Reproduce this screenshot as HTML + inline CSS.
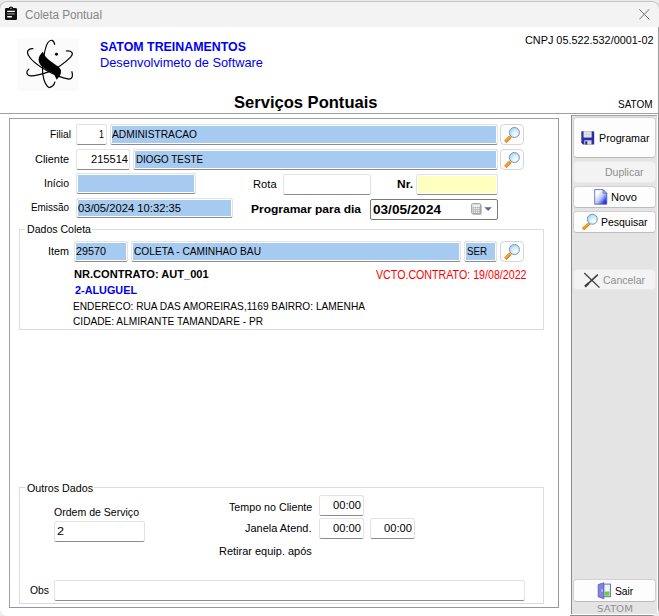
<!DOCTYPE html>
<html><head><meta charset="utf-8"><title>Coleta Pontual</title>
<style>
*{box-sizing:border-box;margin:0;padding:0}
html,body{width:659px;height:616px;overflow:hidden;background:#ebebeb}
body{font-family:"Liberation Sans","DejaVu Sans",sans-serif;font-size:11px;color:#000;position:relative}
.abs{position:absolute;white-space:nowrap}
#win{position:absolute;left:0;top:0;width:659px;height:616px;background:#fff;border-radius:8px;overflow:hidden}
#frame{position:absolute;left:-1px;top:1px;width:661px;height:20px;border:1px solid #c4c4c4;border-bottom:0;border-radius:8px 8px 0 0;pointer-events:none}
#tbar{position:absolute;left:0;top:0;width:659px;height:27px;background:#f3f3f3;border-top:1px solid #ebebeb}
.t{position:absolute;white-space:nowrap;font-size:11px;line-height:14px;transform-origin:0 0;display:block}
.b{font-weight:bold}
.ed{position:absolute;background:#fff;border:1px solid #e3e3e3;border-bottom:1px solid #8c8c8c;border-radius:2.5px}
.bl{background:#a6caf0;box-shadow:inset 0 0 0 1px #fff}
.ye{background:#ffffc0;box-shadow:inset 0 0 0 1px #fff}
.grp{position:absolute;border:1px solid #dcdcdc}
.gl{position:absolute;background:#fff;height:14px}
.btn{position:absolute;left:573px;width:83px;background:#fdfdfd;border:1px solid #d0d0d0;border-bottom-color:#bcbcbc;border-radius:4px}
.btn.dis{background:#f3f3f3;border-color:#e9e9e9}
.sb{position:absolute;width:24px;height:21px;background:#fdfdfd;border:1px solid #d6d6d6;border-radius:4px}
</style></head><body>
<div id="win">
<div id="tbar"></div>
<svg class="abs" style="left:4px;top:6px" width="14" height="15" viewBox="0 0 14 15"><path d="M2.2 2.1h2.6a2.2 1.5 0 0 1 4.4 0h2.6a1.2 1.2 0 0 1 1.2 1.2v9.5a1.2 1.2 0 0 1-1.2 1.2h-9.6a1.2 1.2 0 0 1-1.2-1.2v-9.5a1.2 1.2 0 0 1 1.2-1.2z" fill="#111"/><ellipse cx="7" cy="2.3" rx="1.2" ry="0.5" fill="#999"/><rect x="3.1" y="4.7" width="7.8" height="1.3" rx="0.4" fill="#fff"/><rect x="3.1" y="7.3" width="7.8" height="1.3" rx="0.4" fill="#8a8a8a"/><rect x="3.1" y="10" width="4.9" height="1.4" rx="0.4" fill="#fff"/></svg>
<svg class="abs" style="left:639px;top:9px" width="11" height="11" viewBox="0 0 11 11"><path d="M0.3 0.3L10.3 10.3M10.3 0.3L0.3 10.3" stroke="#6e6e6e" stroke-width="1" fill="none"/></svg>

<div class="abs" style="left:17px;top:38px;width:62px;height:53px;background:#fbfbfb"></div>
<svg class="abs" style="left:14px;top:34px" width="70" height="60" viewBox="0 0 659 565">
<g fill="none" stroke="#000" stroke-width="11" stroke-linecap="round">
<path d="M383 98C375 55 345 45 320 80C295 115 280 190 268 320C265 400 290 480 330 505C355 500 378 478 385 452"/>
<path d="M178 138C135 135 115 165 135 200C160 245 230 300 300 340C360 375 450 415 515 425C555 425 555 385 545 355"/>
<path d="M140 330C110 355 115 390 160 395C215 395 290 370 345 350C420 315 490 260 535 215C565 180 545 155 492 160"/>
</g>
<path d="M272 166C285 200 310 232 348 258C388 286 428 308 440 335C450 372 430 402 402 430C390 408 386 388 372 374C338 352 288 332 252 296C230 268 224 235 242 203C252 188 262 178 272 166Z" fill="#000"/>
<circle cx="400" cy="190" r="14" fill="#000"/>
</svg>
<div class="abs" style="left:0;top:113px;width:659px;height:1px;background:#a0a0a0"></div>
<div class="abs" style="left:658px;top:27px;width:1px;height:87px;background:#9c9c9c"></div>

<div class="abs" style="left:9px;top:118px;width:550px;height:490px;border:1px solid #979797;border-top-color:#a0a0a0;border-left-color:#a0a0a0"></div>

<div class="ed" style="left:76px;top:124px;width:31px;height:21px"></div>
<div class="ed bl" style="left:110px;top:124px;width:388px;height:21px"></div>
<div class="sb" style="left:500px;top:124px"><svg width="22" height="19" viewBox="1 1 22 19" style="position:absolute;left:0;top:0"><defs><radialGradient id="lg" cx="0.65" cy="0.7" r="0.8"><stop offset="0" stop-color="#fff"/><stop offset="0.45" stop-color="#d6f0fc"/><stop offset="1" stop-color="#9fcdf5"/></radialGradient></defs><path d="M10.5 12.7L5.3 17.8" stroke="#c87410" stroke-width="3.2" stroke-linecap="butt"/><path d="M10.3 12.5L5.1 17.6" stroke="#f9a026" stroke-width="2.2" stroke-linecap="butt"/><circle cx="14.4" cy="8.5" r="5" fill="url(#lg)" stroke="#7f90c0" stroke-width="1"/></svg></div>
<div class="ed" style="left:76px;top:149px;width:54px;height:21px"></div>
<div class="ed bl" style="left:133px;top:149px;width:365px;height:21px"></div>
<div class="sb" style="left:500px;top:149px"><svg width="22" height="19" viewBox="1 1 22 19" style="position:absolute;left:0;top:0"><defs><radialGradient id="lg" cx="0.65" cy="0.7" r="0.8"><stop offset="0" stop-color="#fff"/><stop offset="0.45" stop-color="#d6f0fc"/><stop offset="1" stop-color="#9fcdf5"/></radialGradient></defs><path d="M10.5 12.7L5.3 17.8" stroke="#c87410" stroke-width="3.2" stroke-linecap="butt"/><path d="M10.3 12.5L5.1 17.6" stroke="#f9a026" stroke-width="2.2" stroke-linecap="butt"/><circle cx="14.4" cy="8.5" r="5" fill="url(#lg)" stroke="#7f90c0" stroke-width="1"/></svg></div>
<div class="ed bl" style="left:76px;top:173px;width:120px;height:21px"></div>
<div class="ed" style="left:283px;top:174px;width:88px;height:21px"></div>
<div class="ed ye" style="left:416px;top:174px;width:82px;height:21px"></div>
<div class="ed bl" style="left:76px;top:198px;width:157px;height:20px"></div>
<div class="abs" style="left:370px;top:199px;width:128px;height:21px;background:#fff;border:1px solid #7a7a7a;border-radius:2px"></div>
<svg class="abs" style="left:471px;top:203px" width="22" height="13" viewBox="0 0 22 13"><rect x="1.6" y="1.8" width="9" height="10" rx="1" fill="#b8b8b8"/><rect x="0.7" y="0.7" width="9" height="10" rx="1" fill="#fdfdfd" stroke="#8a8a8a" stroke-width="0.9"/><rect x="1.2" y="1.2" width="8" height="1.4" fill="#dcdcdc"/><path d="M2.3 3.6v6.4M4.3 3.6v6.4M6.3 3.6v6.4M8.3 3.6v6.4M1.4 4.6h7.8M1.4 6.6h7.8M1.4 8.6h7.8" stroke="#a9a9a9" stroke-width="0.7" fill="none"/><path d="M13.4 4.2h7.4l-3.7 3.9z" fill="#4f6b98"/></svg>

<div class="grp" style="left:19px;top:229px;width:525px;height:101px"></div>
<div class="gl" style="left:25px;top:222px;width:67px"></div>
<div class="ed bl" style="left:73.5px;top:241px;width:54px;height:21px"></div>
<div class="ed bl" style="left:131px;top:241px;width:330px;height:21px"></div>
<div class="ed bl" style="left:464px;top:241px;width:33px;height:21px"></div>
<div class="sb" style="left:500px;top:241px"><svg width="22" height="19" viewBox="1 1 22 19" style="position:absolute;left:0;top:0"><defs><radialGradient id="lg" cx="0.65" cy="0.7" r="0.8"><stop offset="0" stop-color="#fff"/><stop offset="0.45" stop-color="#d6f0fc"/><stop offset="1" stop-color="#9fcdf5"/></radialGradient></defs><path d="M10.5 12.7L5.3 17.8" stroke="#c87410" stroke-width="3.2" stroke-linecap="butt"/><path d="M10.3 12.5L5.1 17.6" stroke="#f9a026" stroke-width="2.2" stroke-linecap="butt"/><circle cx="14.4" cy="8.5" r="5" fill="url(#lg)" stroke="#7f90c0" stroke-width="1"/></svg></div>

<div class="grp" style="left:19px;top:487px;width:525px;height:117px"></div>
<div class="gl" style="left:25px;top:480px;width:69px"></div>
<div class="ed" style="left:54px;top:521px;width:90.5px;height:21px"></div>
<div class="ed" style="left:319px;top:495px;width:45px;height:21px"></div>
<div class="ed" style="left:319px;top:518px;width:45px;height:21px"></div>
<div class="ed" style="left:370px;top:518px;width:45px;height:21px"></div>
<div class="ed" style="left:54px;top:580px;width:470.5px;height:21px"></div>

<div class="abs" style="left:570px;top:114px;width:89px;height:502px;background:#fff;border-right:1px solid #8c8c8c;border-bottom:1px solid #8c8c8c"></div>
<div class="abs" style="left:571px;top:115px;width:86px;height:499px;background:#e4e4e4;border-left:1px solid #8a8a8a;border-top:1px solid #a0a0a0"></div>
<div class="btn" style="top:117px;height:41px"></div>
<div class="btn dis" style="top:161px;height:22px"></div>
<div class="btn" style="top:186px;height:22px"></div>
<div class="btn" style="top:211px;height:22px"></div>
<div class="btn dis" style="top:269px;height:21px"></div>
<div class="btn" style="top:579px;height:23px"></div>
<!-- floppy -->
<svg class="abs" style="left:581px;top:131px" width="14" height="15" viewBox="0 0 14 15"><path d="M1.2 0.3h11a1 1 0 0 1 1 1v12.2h-11.2l-1.8-1.8v-10.4a1 1 0 0 1 1-1z" fill="#2b2da3"/><path d="M0.6 1.5v10" stroke="#6a6fd0" stroke-width="1"/><rect x="2.6" y="0.3" width="8" height="6.2" fill="#f4f4f4"/><path d="M3.2 1.8h6.8M3.2 3.4h6.8M3.2 5h6.8" stroke="#c4c4c4" stroke-width="0.8"/><rect x="3.3" y="9.3" width="7.2" height="4.2" fill="#d9d9d9"/><rect x="4.2" y="10.3" width="2.1" height="3.2" fill="#2b2da3"/></svg>
<!-- new page -->
<svg class="abs" style="left:594px;top:189px" width="14" height="16" viewBox="0 0 14 16"><defs><linearGradient id="pg" x1="0" y1="0" x2="1" y2="1"><stop offset="0.25" stop-color="#ffffff"/><stop offset="0.55" stop-color="#b8c8f8"/><stop offset="0.85" stop-color="#2030e8"/><stop offset="1" stop-color="#1018d0"/></linearGradient></defs><path d="M0.7 0.6h8.3l3.8 3.8v10.8h-12.1z" fill="url(#pg)" stroke="#5c6cb8" stroke-width="0.9"/><path d="M9 0.6v3.8h3.8z" fill="#8fb4f4" stroke="#5c6cb8" stroke-width="0.7"/></svg>
<!-- search -->
<svg class="abs" style="left:581px;top:212px" width="18" height="19" viewBox="0 0 18 19"><path d="M8.3 11.5L2 17.1" stroke="#c87410" stroke-width="3"/><path d="M8.1 11.3L1.8 16.9" stroke="#f9a026" stroke-width="2"/><circle cx="11.3" cy="7.2" r="5" fill="url(#lg)" stroke="#7f90c0" stroke-width="1"/></svg>
<!-- cancel X -->
<svg class="abs" style="left:583px;top:272px" width="18" height="17" viewBox="0 0 18 17"><path d="M1.3 1L16.5 15.6" stroke="#3c3c3c" stroke-width="1.3" fill="none"/><path d="M14.8 2.6L2.2 14.4" stroke="#3c3c3c" stroke-width="1.5" fill="none"/><path d="M5.5 11.3L2 14.6" stroke="#3c3c3c" stroke-width="2.2" fill="none"/></svg>
<!-- door -->
<svg class="abs" style="left:597px;top:582px" width="15" height="18" viewBox="0 0 15 18"><rect x="6.6" y="2.1" width="6.8" height="12.6" fill="#eef6fb" stroke="#6a6ab8" stroke-width="1"/><rect x="7.6" y="9.5" width="4.8" height="4.2" fill="#6ccc3a"/><path d="M1.2 2.6L6.8 0.8v16L1.2 14.8z" fill="#8484e0" stroke="#5858b0" stroke-width="0.8"/><rect x="4.6" y="7.6" width="1" height="2" fill="#fff"/></svg>

<span class="t" style="left:24.5px;top:8px;transform:scaleX(0.9780);font-size:12px;color:#858585">Coleta Pontual</span>
<span class="t" style="left:99.5px;top:39px;transform:scaleX(0.9535);font-size:13px;font-weight:bold;color:#0000f0;line-height:15px">SATOM TREINAMENTOS</span>
<span class="t" style="left:99.5px;top:55px;transform:scaleX(0.9850);font-size:13px;color:#0000f0;line-height:15px">Desenvolvimeto de Software</span>
<span class="t" style="left:524.5px;top:33px;transform:scaleX(0.9864);">CNPJ 05.522.532/0001-02</span>
<span class="t" style="left:233.5px;top:92.5px;transform:scaleX(0.9736);font-size:17px;font-weight:bold;line-height:20px">Serviços Pontuais</span>
<span class="t" style="left:618px;top:97px;transform:scaleX(0.9053);">SATOM</span>
<span class="t" style="left:49.5px;top:127px;transform:scaleX(0.9282);">Filial</span>
<span class="t" style="left:98.5px;top:127px;transform:scaleX(0.8163);">1</span>
<span class="t" style="left:111.5px;top:127px;transform:scaleX(0.9271);">ADMINISTRACAO</span>
<span class="t" style="left:34.5px;top:152px;transform:scaleX(0.9927);">Cliente</span>
<span class="t" style="left:90.5px;top:152px;transform:scaleX(1.0077);">215514</span>
<span class="t" style="left:135.5px;top:152px;transform:scaleX(0.8935);">DIOGO TESTE</span>
<span class="t" style="left:43.5px;top:176px;transform:scaleX(0.9507);">Início</span>
<span class="t" style="left:253.2px;top:177px;transform:scaleX(1.0151);">Rota</span>
<span class="t" style="left:396.5px;top:177px;transform:scaleX(1.0894);font-weight:bold">Nr.</span>
<span class="t" style="left:30.5px;top:200px;transform:scaleX(0.9007);">Emissão</span>
<span class="t" style="left:77.5px;top:201px;transform:scaleX(1.0204);">03/05/2024 10:32:35</span>
<span class="t" style="left:250.5px;top:202px;transform:scaleX(1.0905);font-weight:bold">Programar para dia</span>
<span class="t" style="left:372.5px;top:203px;transform:scaleX(1.1322);font-weight:bold;font-size:12px">03/05/2024</span>
<span class="t" style="left:26.5px;top:222.4px;transform:scaleX(0.9602);">Dados Coleta</span>
<span class="t" style="left:47.5px;top:244px;transform:scaleX(0.9810);">Item</span>
<span class="t" style="left:75.5px;top:244px;transform:scaleX(0.9806);">29570</span>
<span class="t" style="left:133.5px;top:244px;transform:scaleX(0.9248);">COLETA - CAMINHAO BAU</span>
<span class="t" style="left:466.5px;top:244px;transform:scaleX(0.8840);">SER</span>
<span class="t" style="left:73.8px;top:267px;transform:scaleX(1.0078);font-weight:bold">NR.CONTRATO: AUT_001</span>
<span class="t" style="left:375.5px;top:268.2px;transform:scaleX(0.8884);color:#ff0000;font-size:12px">VCTO.CONTRATO: 19/08/2022</span>
<span class="t" style="left:74.5px;top:283px;transform:scaleX(0.9849);font-weight:bold;color:#0000f0">2-ALUGUEL</span>
<span class="t" style="left:72.5px;top:299px;transform:scaleX(0.9227);">ENDERECO: RUA DAS AMOREIRAS,1169 BAIRRO: LAMENHA</span>
<span class="t" style="left:72.5px;top:314px;transform:scaleX(0.9215);">CIDADE: ALMIRANTE TAMANDARE - PR</span>
<span class="t" style="left:26.5px;top:481px;transform:scaleX(0.9724);">Outros Dados</span>
<span class="t" style="left:53.5px;top:505px;transform:scaleX(0.9588);">Ordem de Serviço</span>
<span class="t" style="left:56.5px;top:524px;transform:scaleX(1.1429);">2</span>
<span class="t" style="left:228.7px;top:499.6px;transform:scaleX(0.9730);">Tempo no Cliente</span>
<span class="t" style="left:244.5px;top:521px;transform:scaleX(0.9974);">Janela Atend.</span>
<span class="t" style="left:219.2px;top:544px;transform:scaleX(0.9984);">Retirar equip. após</span>
<span class="t" style="left:332.5px;top:498px;transform:scaleX(1.0170);">00:00</span>
<span class="t" style="left:332.5px;top:521px;transform:scaleX(1.0170);">00:00</span>
<span class="t" style="left:383.5px;top:521px;transform:scaleX(1.0170);">00:00</span>
<span class="t" style="left:29.5px;top:583px;transform:scaleX(0.9412);">Obs</span>
<span class="t" style="left:598.5px;top:131px;transform:scaleX(0.9717);">Programar</span>
<span class="t" style="left:605px;top:165px;transform:scaleX(0.9539);color:#8f8f8f">Duplicar</span>
<span class="t" style="left:610.5px;top:190px;transform:scaleX(1.0122);">Novo</span>
<span class="t" style="left:601px;top:215px;transform:scaleX(0.9505);">Pesquisar</span>
<span class="t" style="left:603px;top:273px;transform:scaleX(0.9539);color:#8f8f8f">Cancelar</span>
<span class="t" style="left:615.2px;top:584px;transform:scaleX(0.9355);">Sair</span>
<span class="t" style="left:596.5px;top:603.3px;transform:scaleX(1.0761);font-family:'DejaVu Sans',sans-serif;font-size:9.5px;color:#909090;line-height:12px">SATOM</span>
</div>
<div id="frame"></div>
</body></html>
